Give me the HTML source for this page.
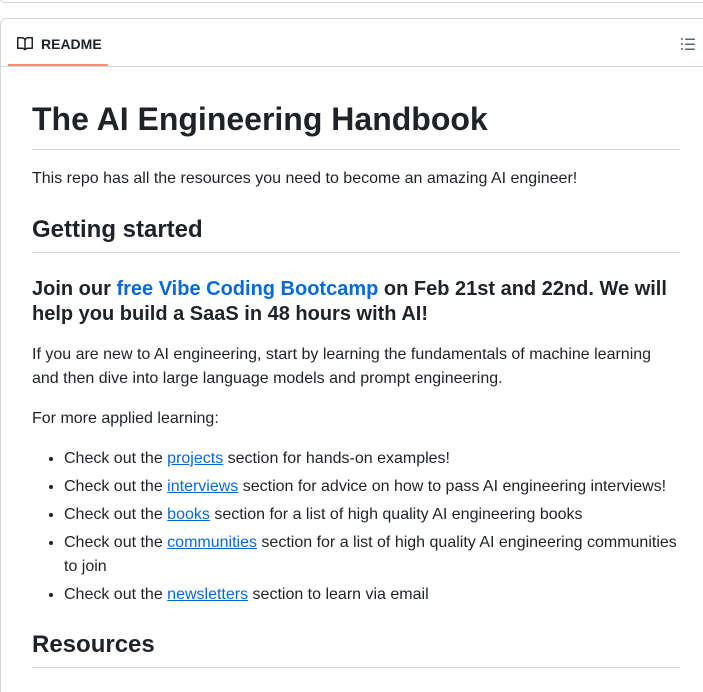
<!DOCTYPE html>
<html style="overflow:hidden;height:692px"><head><style>
body{margin:0;background:#fff;font-family:"Liberation Sans",sans-serif;color:#1f2328;width:703px;height:692px;overflow:hidden;position:relative}
.top{position:absolute;left:-1px;top:-10px;width:720px;height:11px;border:1px solid #d1d9e0;border-radius:6px}
.box{position:absolute;left:0;top:18px;width:720px;height:674px;border:1px solid #d1d9e0;border-bottom:none;border-radius:6px 6px 0 0;box-sizing:border-box}
.hdr{height:47px;border-bottom:1px solid #d1d9e0;position:relative}
.tab{position:absolute;left:7px;top:0;width:100px;height:47px;border-bottom:2px solid #fd8c73;box-sizing:border-box}
.tab span{position:absolute;left:33px;top:17px;font-size:14px;font-weight:bold}
.c{position:absolute;left:32px;top:0;width:648px}
h1{position:absolute;top:99px;margin:0;font-size:32px;font-weight:bold;width:648px;padding-bottom:10px;border-bottom:1px solid #d1d9e0;line-height:40px}
h2{margin:0;font-size:24px;font-weight:bold;border-bottom:1px solid #d1d9e0;position:absolute;width:648px;line-height:30px;padding-bottom:7px}
h3{margin:0;font-size:20px;font-weight:bold;position:absolute;width:648px;line-height:25px}
p{margin:0;position:absolute;font-size:16px;line-height:24px;width:648px}
a{color:#0969da}
ul{margin:0;padding-left:32px;position:absolute;top:447px;font-size:16px;line-height:24px;width:648px;box-sizing:border-box}
li{margin-bottom:4px}
</style></head><body>
<div class="top"></div>
<div class="box"><div class="hdr"><div class="tab">
<svg style="position:absolute;left:9px;top:17px" width="16" height="16" viewBox="0 0 16 16" fill="#1f2328"><path d="M0 1.75A.75.75 0 0 1 .75 1h4.253c1.227 0 2.317.59 3 1.501A3.743 3.743 0 0 1 11.006 1h4.245a.75.75 0 0 1 .75.75v10.5a.75.75 0 0 1-.75.75h-4.507a2.25 2.25 0 0 0-1.591.659l-.622.621a.75.75 0 0 1-1.06 0l-.622-.621A2.25 2.25 0 0 0 5.258 13H.75a.75.75 0 0 1-.75-.75Zm7.251 10.324.004-5.073-.002-2.253A2.25 2.250 0 0 0 5.003 2.5H1.5v9h3.757a3.75 3.75 0 0 1 1.994.574ZM8.755 4.75l-.004 7.322a3.752 3.752 0 0 1 1.992-.572H14.5v-9h-3.495a2.25 2.25 0 0 0-2.25 2.25Z"/></svg>
<span>README</span></div>
<svg style="position:absolute;left:679px;top:17px" width="16" height="16" viewBox="0 0 16 16" fill="#59636e"><path d="M5.750 2.5h8.5a.75.75 0 0 1 0 1.5h-8.5a.75.75 0 0 1 0-1.5Zm0 5h8.5a.75.75 0 0 1 0 1.5h-8.5a.75.75 0 0 1 0-1.5Zm0 5h8.5a.75.75 0 0 1 0 1.5h-8.5a.75.75 0 0 1 0-1.5ZM2 14a1 1 0 1 1 0-2 1 1 0 0 1 0 2Zm1-6a1 1 0 1 1-2 0 1 1 0 0 1 2 0ZM2 4a1 1 0 1 1 0-2 1 1 0 0 1 0 2Z"/></svg>
</div></div>
<div class="c">
<h1>The AI Engineering Handbook</h1>
<p style="top:167px">This repo has all the resources you need to become an amazing AI engineer!</p>
<h2 style="top:215px">Getting started</h2>
<h3 style="top:277px">Join our <a href="#" style="text-decoration:none">free Vibe Coding Bootcamp</a> on Feb 21st and 22nd. We will help you build a SaaS in 48 hours with AI!</h3>
<p style="top:343px">If you are new to AI engineering, start by learning the fundamentals of machine learning and then dive into large language models and prompt engineering.</p>
<p style="top:407px">For more applied learning:</p>
<ul>
<li>Check out the <a href="#">projects</a> section for hands-on examples!</li>
<li>Check out the <a href="#">interviews</a> section for advice on how to pass AI engineering interviews!</li>
<li>Check out the <a href="#">books</a> section for a list of high quality AI engineering books</li>
<li>Check out the <a href="#">communities</a> section for a list of high quality AI engineering communities to join</li>
<li>Check out the <a href="#">newsletters</a> section to learn via email</li>
</ul>
<h2 style="top:630px">Resources</h2>
</div>
</body></html>
